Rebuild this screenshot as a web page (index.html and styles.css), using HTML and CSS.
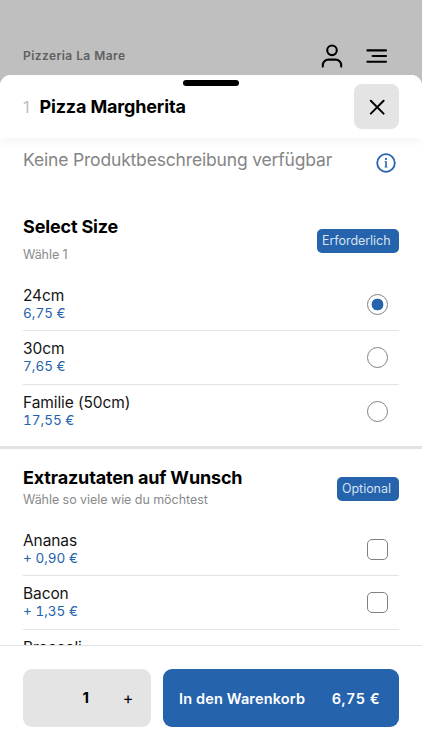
FILE: index.html
```html
<!DOCTYPE html>
<html lang="de">
<head>
    <meta charset="UTF-8">
    <meta name="viewport" content="width=device-width, initial-scale=1.0">
    <title>Pizzeria La Mare</title>
    <link rel="stylesheet" href="styles.css">
</head>
<body>

    <!-- Top bar -->
    <header class="topbar">
        <span class="shop-name">Pizzeria La Mare</span>
        <svg class="icon-user" width="22" height="24" viewBox="0 0 22 24" fill="none" stroke="#000" stroke-width="2.1" stroke-linecap="round">
            <circle cx="11" cy="6.3" r="4.8"/>
            <path d="M1.8 22.6v-1.4a5.6 5.6 0 0 1 5.6-5.6h7.2a5.6 5.6 0 0 1 5.6 5.6v1.4"/>
        </svg>
        <svg class="icon-menu" width="22" height="16" viewBox="0 0 22 16" fill="none" stroke="#000" stroke-width="2.1" stroke-linecap="round">
            <path d="M1.4 2.4h18.6M6.6 8h13.4M1.4 13.7h18.6"/>
        </svg>
    </header>

    <!-- Product sheet -->
    <main class="sheet">
        <div class="sheet-header">
            <div class="handle"></div>
            <span class="product-number">1</span>
            <h1 class="product-title">Pizza Margherita</h1>
            <button class="close-button" aria-label="Schließen">
                <svg width="16" height="16" viewBox="0 0 16 16" fill="none" stroke="#000" stroke-width="2" stroke-linecap="round">
                    <path d="M1.8 1.8l12.8 12.8M14.6 1.8L1.8 14.6"/>
                </svg>
            </button>
        </div>

        <div class="sheet-content">
            <div class="description">
                <p class="description-text">Keine Produktbeschreibung verfügbar</p>
                <svg class="icon-info" width="20" height="20" viewBox="0 0 20 20" fill="none" stroke="#2563ac">
                    <circle cx="10" cy="10" r="8.8" stroke-width="1.8"/>
                    <path d="M10 8.2v6" stroke-width="1.6"/>
                    <path d="M8.6 8.6h1.4M8.5 14h3" stroke-width="0.8"/>
                    <circle cx="10" cy="5.9" r="1.1" fill="#2563ac" stroke="none"/>
                </svg>
            </div>

            <section class="group group-size">
                <div class="group-header">
                    <div>
                        <h2 class="group-title">Select Size</h2>
                        <p class="group-hint">Wähle 1</p>
                    </div>
                    <span class="badge badge-required">Erforderlich</span>
                </div>
                <label class="option">
                    <span class="option-text"><span class="option-name">24cm</span><span class="option-price">6,75 €</span></span>
                    <input class="control radio" type="radio" name="size" checked>
                </label>
                <label class="option">
                    <span class="option-text"><span class="option-name">30cm</span><span class="option-price">7,65 €</span></span>
                    <input class="control radio" type="radio" name="size">
                </label>
                <label class="option">
                    <span class="option-text"><span class="option-name">Familie (50cm)</span><span class="option-price">17,55 €</span></span>
                    <input class="control radio" type="radio" name="size">
                </label>
            </section>

            <section class="group group-extras">
                <div class="group-header">
                    <div>
                        <h2 class="group-title">Extrazutaten auf Wunsch</h2>
                        <p class="group-hint">Wähle so viele wie du möchtest</p>
                    </div>
                    <span class="badge badge-optional">Optional</span>
                </div>
                <label class="option">
                    <span class="option-text"><span class="option-name">Ananas</span><span class="option-price">+ 0,90 €</span></span>
                    <input class="control checkbox" type="checkbox">
                </label>
                <label class="option">
                    <span class="option-text"><span class="option-name">Bacon</span><span class="option-price">+ 1,35 €</span></span>
                    <input class="control checkbox" type="checkbox">
                </label>
                <label class="option option-last">
                    <span class="option-text"><span class="option-name">Broccoli</span></span>
                </label>
            </section>
        </div>

        <!-- Quantity and cart -->
        <footer class="footer">
            <div class="quantity">
                <span class="quantity-value">1</span>
                <button class="quantity-plus" aria-label="Mehr">+</button>
            </div>
            <button class="cart-button">
                <span class="cart-label">In den Warenkorb</span>
                <span class="cart-price">6,75 €</span>
            </button>
        </footer>
    </main>

</body>
</html>
```
FILE: styles.css
```css
* {
    box-sizing: border-box;
}
body {
    margin: 0;
    height: 100vh;
    display: flex;
    flex-direction: column;
    overflow: hidden;
    background-color: #bfbfbf;
    color: #000;
    font-family: Inter, "Liberation Sans", sans-serif;
}
h1, h2, p {
    margin: 0;
}
button {
    border: none;
    padding: 0;
    font-family: inherit;
    color: inherit;
    cursor: pointer;
}

/* Top bar */
.topbar {
    flex: none;
    height: 75px;
    padding: 36px 34px 0 23px;
    display: flex;
    align-items: center;
}
.shop-name {
    flex: 1;
    font-size: 12px;
    font-weight: 600;
    line-height: 15px;
    letter-spacing: 0.43px;
    color: #606060;
}
.icon-menu {
    margin-left: 23px;
}

/* Sheet */
.sheet {
    flex: 1;
    min-height: 0;
    display: flex;
    flex-direction: column;
    background-color: #fff;
    border-radius: 11px 11px 0 0;
}
.sheet-header {
    flex: none;
    position: relative;
    z-index: 1;
    height: 63px;
    padding: 0 23px;
    display: flex;
    align-items: center;
    background-color: #fff;
    border-radius: 11px 11px 0 0;
    box-shadow: 0 7px 8px -2px rgba(0, 0, 0, 0.04);
}
.handle {
    position: absolute;
    top: 4.5px;
    left: 50%;
    width: 56px;
    height: 6px;
    margin-left: -28px;
    border-radius: 3px;
    background-color: #000;
}
.product-number {
    width: 16.5px;
    font-size: 16px;
    color: #bcbcbc;
}
.product-title {
    flex: 1;
    font-size: 18px;
    font-weight: 700;
    letter-spacing: -0.16px;
}
.close-button {
    width: 45px;
    height: 45px;
    display: flex;
    align-items: center;
    justify-content: center;
    border-radius: 8px;
    background-color: #e4e4e4;
}
.sheet-content {
    flex: 1;
    min-height: 0;
    overflow: hidden;
}
.description {
    height: 74px;
    padding: 10px 26px 0 23px;
    display: flex;
    justify-content: space-between;
    align-items: flex-start;
}
.description-text {
    font-size: 17.5px;
    line-height: 24px;
    letter-spacing: -0.17px;
    color: #858585;
    white-space: nowrap;
}
.icon-info {
    margin-top: 5px;
}

/* Option groups */
.group {
    padding: 0 23px;
}
.group-size {
    height: 237px;
    border-bottom: 3px solid #e3e3e3;
}
.group-header {
    display: flex;
    justify-content: space-between;
    align-items: center;
}
.group-size .group-header {
    height: 66px;
    padding-bottom: 8px;
}
.group-extras .group-header {
    height: 74px;
    padding-top: 6px;
}
.group-title {
    font-size: 18px;
    font-weight: 700;
    line-height: 22px;
    letter-spacing: -0.16px;
}
.group-hint {
    font-size: 12.5px;
    line-height: 22px;
    letter-spacing: -0.05px;
    color: #8a8a8a;
}
.group-size .group-hint {
    margin-top: 6px;
}
.badge {
    height: 24px;
    padding-left: 5px;
    border-radius: 5px;
    font-size: 12.5px;
    line-height: 24px;
    letter-spacing: -0.05px;
    background-color: #2563ac;
    color: #d6e2f0;
}
.badge-required {
    width: 82px;
}
.badge-optional {
    width: 62px;
}
.option {
    height: 53.3px;
    padding: 1px 11px 0 0;
    display: flex;
    justify-content: space-between;
    align-items: center;
    border-bottom: 1px solid #e3e3e3;
}
.option:last-child {
    border-bottom-color: transparent;
}
.option-last {
    padding-top: 9px;
    align-items: flex-start;
}
.option-text {
    display: flex;
    flex-direction: column;
}
.option-name {
    font-size: 15.5px;
    line-height: 18px;
    letter-spacing: -0.1px;
    color: #151515;
}
.option-price {
    font-size: 13.5px;
    line-height: 17px;
    font-variant-numeric: tabular-nums;
    color: #2563ac;
}
.control {
    appearance: none;
    width: 21px;
    height: 21px;
    margin: 0;
    border: 1px solid #808080;
    background-color: #fff;
}
.radio {
    border-radius: 50%;
}
.radio:checked {
    background: radial-gradient(circle, #2563ac 5.6px, #fff 6.2px);
}
.checkbox {
    border-radius: 5px;
}

/* Footer */
.footer {
    flex: none;
    height: 105px;
    padding: 23px 23px 0;
    display: flex;
    gap: 12px;
    border-top: 1px solid #e3e3e3;
    background-color: #fff;
}
.quantity {
    width: 128px;
    height: 58px;
    display: flex;
    align-items: center;
    justify-content: flex-end;
    border-radius: 9px;
    background-color: #e4e4e4;
}
.quantity-value {
    margin: -2px 32px 0 0;
    font-size: 15px;
    font-weight: 700;
}
.quantity-plus {
    width: 14px;
    margin-right: 16px;
    background: none;
    font-size: 16px;
}
.cart-button {
    flex: 1;
    height: 58px;
    padding: 1px 19px 0 16px;
    display: flex;
    align-items: center;
    justify-content: space-between;
    border-radius: 9px;
    background-color: #2563ac;
    color: #fff;
    font-size: 14.5px;
    font-weight: 600;
}
.cart-label {
    letter-spacing: 0.15px;
}
.cart-price {
    font-variant-numeric: tabular-nums;
    letter-spacing: 0.4px;
}
```
